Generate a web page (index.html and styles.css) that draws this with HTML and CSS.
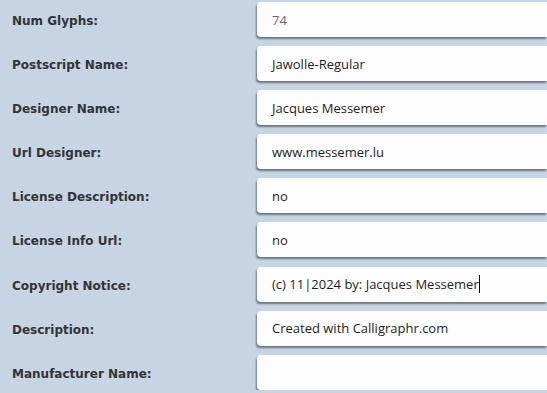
FILE: index.html
```html
<!DOCTYPE html>
<html lang="en">
<head>
<meta charset="UTF-8">
<title>Font Info</title>
<link rel="stylesheet" href="styles.css">
</head>
<body>

<div class="form">

<div class="row">
<label>Num Glyphs:</label>
<div class="field muted">74</div>
</div>

<div class="row">
<label>Postscript Name:</label>
<div class="field">Jawolle-Regular</div>
</div>

<div class="row">
<label>Designer Name:</label>
<div class="field">Jacques Messemer</div>
</div>

<div class="row">
<label>Url Designer:</label>
<div class="field">www.messemer.lu</div>
</div>

<div class="row">
<label>License Description:</label>
<div class="field">no</div>
</div>

<div class="row">
<label>License Info Url:</label>
<div class="field">no</div>
</div>

<div class="row">
<label>Copyright Notice:</label>
<div class="field">(c) 11|2024 by: Jacques Messemer<span class="caret"></span></div>
</div>

<div class="row">
<label>Description:</label>
<div class="field">Created with Calligraphr.com</div>
</div>

<div class="row">
<label>Manufacturer Name:</label>
<div class="field"></div>
</div>

</div>

</body>
</html>
```

FILE: styles.css
```css
body{
    margin:0;
    background:#c6d4e4;
    overflow:hidden;
    font-family:"DejaVu Sans",Verdana,sans-serif;
}

.form{
    display:flex;
    flex-direction:column;
    gap:9.1px;
    padding-top:2px;
}

.row{
    display:grid;
    grid-template-columns:257px 1fr;
    align-items:center;
}

label{
    padding-left:12px;
    padding-top:3px;
    font-size:12px;
    font-weight:bold;
    color:#333;
}

.field{
    height:35px;
    box-sizing:border-box;
    padding:0 15px;
    display:flex;
    align-items:center;
    background:#fdfdfd;
    border-radius:4px 0 0 4px;
    box-shadow:-1px 2px 2px rgba(0,0,0,0.45);
    font-family:"Open Sans",sans-serif;
    font-size:13px;
    color:#1e1e1e;
    white-space:nowrap;
    overflow:hidden;
}

.muted{
    color:#6a6a6a;
}

.caret{
    display:inline-block;
    width:1px;
    height:18px;
    background:#000;
}
```
